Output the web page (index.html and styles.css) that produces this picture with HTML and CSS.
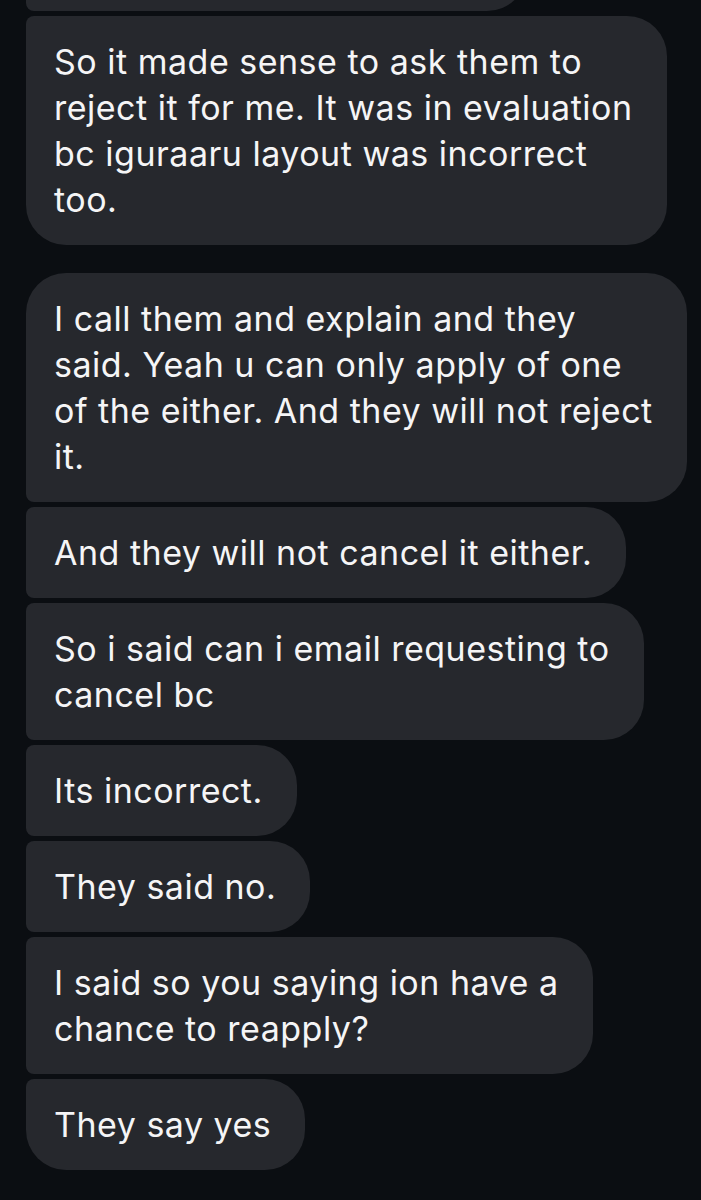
FILE: index.html
```html
<!DOCTYPE html>
<html lang="en">

<head>
    <meta charset="UTF-8">
    <meta name="viewport" content="width=device-width, initial-scale=1.0">
    <title>Messages</title>
    <link rel="stylesheet" href="styles.css">
</head>

<body>
    <div class="thread">
        <div class="group">
            <div class="msg msg-cut"></div>
            <div class="msg">So it made sense to ask them to<br>reject it for me. It was in evaluation<br>bc iguraaru layout was incorrect<br>too.</div>
        </div>

        <div class="group">
            <div class="msg">I call them and explain and they<br>said. Yeah u can only apply of one<br>of the either. And they will not reject<br>it.</div>
            <div class="msg">And they will not cancel it either.</div>
            <div class="msg">So i said can i email requesting to<br>cancel bc</div>
            <div class="msg">Its incorrect.</div>
            <div class="msg">They said no.</div>
            <div class="msg">I said so you saying ion have a<br>chance to reapply?</div>
            <div class="msg">They say yes</div>
        </div>
    </div>
</body>

</html>
```

FILE: styles.css
```css
body {
    margin: 0;
    background-color: #0b0e12;
    font-family: Inter, "Noto Sans", sans-serif;
    color: #f5f5f6;
}

.thread {
    display: flex;
    flex-direction: column;
    gap: 28px;
    padding: 0 26px 28px 26px;
    margin-top: -80px;
}

.group {
    display: flex;
    flex-direction: column;
    align-items: flex-start;
    gap: 5px;
}

.msg {
    background-color: #26282d;
    font-size: 34px;
    letter-spacing: 0.5px;
    line-height: 46px;
    padding: 22.5px 34px 22.5px 28px;
    border-radius: 8px 40px 40px 8px;
    white-space: nowrap;
}

/* first and last bubble of a group get round left corners */
.msg:first-child {
    border-top-left-radius: 40px;
}

.msg:last-child {
    border-bottom-left-radius: 40px;
}

/* bubble scrolled off the top of the screen */
.msg-cut {
    width: 501px;
    height: 91px;
    padding: 0;
    box-sizing: border-box;
}
```
